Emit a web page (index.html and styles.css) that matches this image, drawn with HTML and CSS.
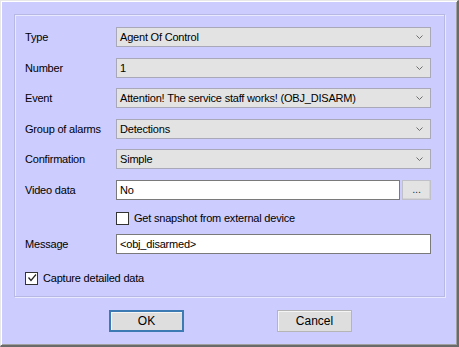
FILE: index.html
```html
<!DOCTYPE html>
<html lang="en">
<head>
    <meta charset="UTF-8">
    <title>Event settings</title>
    <link rel="stylesheet" href="styles.css">
</head>
<body>
    <div class="dialog">
        <div class="group">
            <label class="label">Type</label>
            <div class="combo"><span>Agent Of Control</span><svg class="arrow" width="7" height="4" viewBox="0 0 7 4"><polyline points="0.5,0.5 3.5,3.5 6.5,0.5" /></svg></div>

            <label class="label">Number</label>
            <div class="combo"><span>1</span><svg class="arrow" width="7" height="4" viewBox="0 0 7 4"><polyline points="0.5,0.5 3.5,3.5 6.5,0.5" /></svg></div>

            <label class="label">Event</label>
            <div class="combo"><span>Attention! The service staff works! (OBJ_DISARM)</span><svg class="arrow" width="7" height="4" viewBox="0 0 7 4"><polyline points="0.5,0.5 3.5,3.5 6.5,0.5" /></svg></div>

            <label class="label">Group of alarms</label>
            <div class="combo"><span>Detections</span><svg class="arrow" width="7" height="4" viewBox="0 0 7 4"><polyline points="0.5,0.5 3.5,3.5 6.5,0.5" /></svg></div>

            <label class="label">Confirmation</label>
            <div class="combo"><span>Simple</span><svg class="arrow" width="7" height="4" viewBox="0 0 7 4"><polyline points="0.5,0.5 3.5,3.5 6.5,0.5" /></svg></div>

            <label class="label">Video data</label>
            <div class="field-row">
                <div class="edit">No</div>
                <div class="browse">...</div>
            </div>

            <div class="check-row wide">
                <span class="checkbox"></span>
                <span>Get snapshot from external device</span>
            </div>

            <label class="label">Message</label>
            <div class="edit">&lt;obj_disarmed&gt;</div>

            <div class="check-row capture">
                <span class="checkbox"><svg width="10" height="10" viewBox="0 0 10 10"><polyline points="1.5,4.5 4,7.5 9,1.5" /></svg></span>
                <span>Capture detailed data</span>
            </div>
        </div>

        <div class="buttons">
            <button class="btn default">OK</button>
            <button class="btn">Cancel</button>
        </div>
    </div>
</body>
</html>
```

FILE: styles.css
```css
:root {
    --bg: #ccccff;
    --combo-bg: #e3e3e3;
    --combo-border: #a8a8b8;
    --edit-border: #7a7a7a;
    --text: #000000;
}

* {
    margin: 0;
    padding: 0;
    box-sizing: border-box;
}

body {
    width: 459px;
    height: 347px;
    overflow: hidden;
    font-family: 'Liberation Sans', Arial, sans-serif;
    font-size: 11px;
    letter-spacing: -0.2px;
    color: var(--text);
    background: var(--bg);
}

.dialog {
    width: 459px;
    height: 347px;
    background: var(--bg);
    border-top: 1px solid #e8e8e8;
    border-left: 1px solid #e8e8e8;
    border-right: 2px solid #6a6a6a;
    border-bottom: 2px solid #6a6a6a;
    box-shadow: inset 1px 1px 0 #ffffff, inset -1px -1px 0 #a0a0a0;
    padding: 13px 0 0 13px;
}

.group {
    width: 431px;
    height: 283px;
    border: 1px solid #b8b8e4;
    box-shadow: inset 1px 1px 0 #e8e8ff, 1px 1px 0 #e8e8ff;
    padding: 12px 0 0 10px;
    display: grid;
    grid-template-columns: 91px 315px;
    grid-template-rows: 31px 30px 31px 30px 31px 31px 23px 37px 20px;
    align-items: start;
}

.label {
    line-height: 20px;
    white-space: nowrap;
}

.combo {
    height: 20px;
    background: var(--combo-bg);
    border: 1px solid var(--combo-border);
    display: flex;
    align-items: center;
    justify-content: space-between;
    padding: 0 7px 0 3px;
    line-height: 18px;
}

.arrow {
    fill: none;
    stroke: #6e6e6e;
    stroke-width: 1;
}

.field-row {
    display: flex;
    gap: 2px;
}

.edit {
    flex: 1;
    height: 20px;
    background: #ffffff;
    border: 1px solid var(--edit-border);
    padding: 0 3px;
    line-height: 18px;
}

.browse {
    width: 29px;
    height: 20px;
    background: var(--combo-bg);
    border: 1px solid #c0c0c8;
    box-shadow: inset -1px -1px 0 #d4d4d4;
    text-align: center;
    line-height: 16px;
    color: #333333;
}

.check-row {
    display: flex;
    align-items: center;
    gap: 5px;
    height: 14px;
    white-space: nowrap;
}

.check-row.wide {
    grid-column: 2;
}

.check-row.capture {
    grid-column: 1 / 3;
}

.checkbox {
    width: 13px;
    height: 13px;
    background: #ffffff;
    border: 1px solid #333333;
    display: flex;
    align-items: center;
    justify-content: center;
}

.checkbox svg {
    fill: none;
    stroke: #222222;
    stroke-width: 1.2;
}

.buttons {
    display: flex;
    padding: 13px 0 0 95px;
    gap: 93px;
}

.btn {
    width: 75px;
    height: 22px;
    font-family: inherit;
    font-size: 12px;
    color: var(--text);
    background: #dedede;
    border: 1px solid #b5b5b5;
    box-shadow: inset 1px 1px 0 #f4f4f4;
}

.btn.default {
    border: 2px solid #3c7ab4;
}
```
